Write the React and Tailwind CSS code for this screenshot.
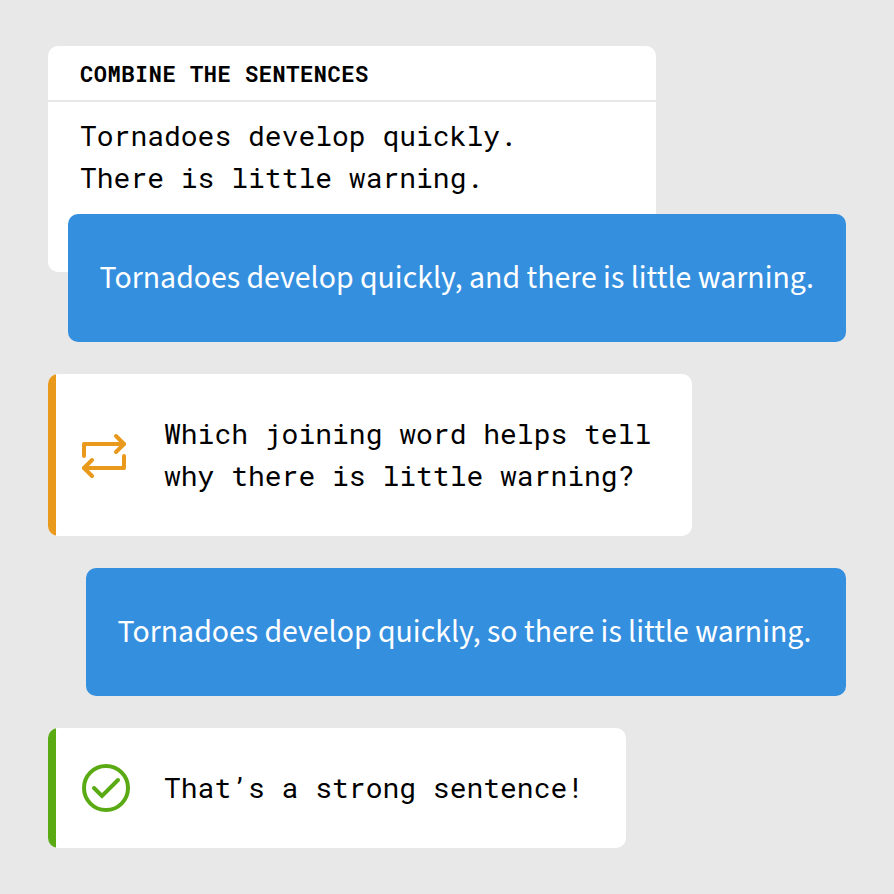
function RepeatIcon() {
  return (
    <svg width="48" height="48" viewBox="0 -3 48 48" fill="none" stroke="#e99a1c" strokeWidth="4" strokeLinecap="round" strokeLinejoin="round" className="shrink-0">
      <path d="M2 22V10H42" />
      <path d="M34 2L42 10L34 18" />
      <path d="M42 22V34H2" />
      <path d="M10 26L2 34L10 42" />
    </svg>
  );
}

function CheckIcon() {
  return (
    <svg width="48" height="48" viewBox="0 0 48 48" fill="none" stroke="#5aaa14" strokeWidth="4" strokeLinecap="round" strokeLinejoin="miter" className="shrink-0">
      <circle cx="24" cy="24" r="22" />
      <path d="M12 24L20 32L36 16" />
    </svg>
  );
}

const mono = "font-['Roboto_Mono','DejaVu_Sans_Mono',monospace] text-[28px] leading-[42px] whitespace-nowrap";

function Answer({ children, className }) {
  return (
    <div className={`flex h-32 items-center self-end rounded-[10px] bg-[#348fdf] pl-[31.5px] font-['Source_Sans_3','Open_Sans',sans-serif] text-[31.8px] leading-[42px] whitespace-nowrap text-white ${className}`}>
      <p>{children}</p>
    </div>
  );
}

export default function App() {
  return (
    <main className="flex h-[894px] w-[894px] flex-col items-start overflow-hidden bg-[#e8e8e8] px-12 pt-[46px] text-black">
      <section className="h-[226px] w-[608px] rounded-[10px] bg-white">
        <h1 className="h-14 border-b-2 border-[#e8e8e8] pl-8 font-['Roboto_Mono','DejaVu_Sans_Mono',monospace] text-[22px] leading-[56px] font-bold tracking-[0.55px] whitespace-nowrap">
          COMBINE THE SENTENCES
        </h1>
        <div className={`${mono} pt-[13px] pl-8`}>
          <p>Tornadoes develop quickly.</p>
          <p>There is little warning.</p>
        </div>
      </section>
      <Answer className="z-10 -mt-[58px] w-[778px]">Tornadoes develop quickly, and there is little warning.</Answer>
      <section className="mt-8 flex h-[162px] w-[644px] items-center overflow-hidden rounded-[10px] bg-white">
        <div className="h-full w-2 bg-[#e99a1c]" />
        <div className="flex items-center gap-[34px] pl-[26px]">
          <RepeatIcon />
          <div className={mono}>
            <p>Which joining word helps tell</p>
            <p>why there is little warning?</p>
          </div>
        </div>
      </section>
      <Answer className="mt-8 w-[760px]">Tornadoes develop quickly, so there is little warning.</Answer>
      <section className="mt-8 flex h-[120px] w-[578px] items-center overflow-hidden rounded-[10px] bg-white">
        <div className="h-full w-2 bg-[#5aaa14]" />
        <div className="flex items-center gap-[34px] pl-[26px]">
          <CheckIcon />
          <p className={mono}>That’s a strong sentence!</p>
        </div>
      </section>
    </main>
  );
}
